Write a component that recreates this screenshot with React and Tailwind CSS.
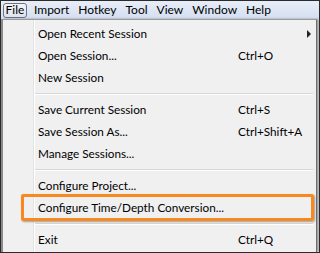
import React from "react";

const font = { fontFamily: 'Lato, "Open Sans", sans-serif' };

function Item({ label, shortcut, arrow }) {
  return (
    <div className="relative flex h-[22px] items-center text-[11.75px] text-black">
      <span className="pl-[35px] w-[235px] whitespace-nowrap">{label}</span>
      {shortcut && <span className="whitespace-nowrap">{shortcut}</span>}
      {arrow && (
        <svg className="absolute right-[4px] top-[7px]" width="5" height="8" viewBox="0 0 5 8">
          <path d="M0 0 L4 4 L0 8 Z" fill="#222" />
        </svg>
      )}
    </div>
  );
}

function Sep() {
  return (
    <div className="h-[10px] flex flex-col justify-center pl-[32px] pr-[3px]">
      <div className="h-px bg-[#d7d7d7]" />
      <div className="h-px bg-white" />
    </div>
  );
}

export default function App() {
  const menus = ["Import", "Hotkey", "Tool", "View", "Window", "Help"];
  return (
    <div
      className="relative w-[320px] h-[253px] overflow-hidden border border-[#2a2a2a] bg-[#f0f0f0] flex flex-col"
      style={font}
    >
      <div className="h-[18px] flex items-center bg-gradient-to-b from-[#e8edf8] to-[#d5dff1] text-[12px] text-black">
        <div className="ml-[2px] w-[24px] h-[15px] flex items-center justify-center rounded-[3px] border border-[#6b7484] bg-gradient-to-b from-[#f3f5f9] to-[#dde3ec]">
          File
        </div>
        <div className="flex gap-[9px] ml-[7px]">
          {menus.map((m) => (
            <span key={m}>{m}</span>
          ))}
        </div>
      </div>
      <div className="relative flex-1 ml-0 mr-[2px] border-l-2 border-r border-t border-l-[#8a8a8a] border-r-[#6e6e6e] border-t-[#9a9a9a] bg-[#f0f0f0] shadow-[2px_0_2px_rgba(0,0,0,0.35)] pt-[3px]">
        <div className="absolute left-[30px] top-0 bottom-0 w-px bg-[#e2e3e3]" />
        <div className="absolute left-[31px] top-0 bottom-0 w-px bg-white" />
        <div className="relative">
          <Item label="Open Recent Session" arrow />
          <Item label="Open Session..." shortcut="Ctrl+O" />
          <Item label="New Session" />
          <Sep />
          <Item label="Save Current Session" shortcut="Ctrl+S" />
          <Item label="Save Session As..." shortcut="Ctrl+Shift+A" />
          <Item label="Manage Sessions..." />
          <Sep />
          <Item label="Configure Project..." />
          <Item label="Configure Time/Depth Conversion..." />
          <Sep />
          <Item label="Exit" shortcut="Ctrl+Q" />
        </div>
      </div>
      <div className="absolute left-[20px] top-[193px] w-[293px] h-[27px] border-[3px] border-[#f7891e] rounded-[2px] shadow-[1px_1px_2px_rgba(0,0,0,0.35)]" />
    </div>
  );
}
